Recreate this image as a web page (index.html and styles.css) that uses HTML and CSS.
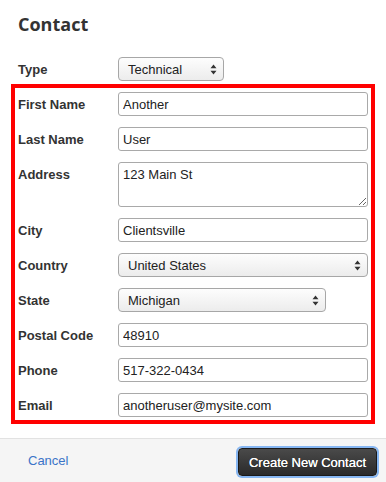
FILE: index.html
```html
<!DOCTYPE html>
<html>
<head>
<meta charset="utf-8">
<link rel="stylesheet" href="styles.css">
</head>
<body>
<div class="panel">
  <h2 class="title">Contact</h2>
  <div class="form">
    <div class="row">
      <label class="lbl">Type</label>
      <div class="sel sel-type"><span class="sel-text">Technical</span>
        <svg class="arr" width="7" height="11" viewBox="0 0 7 11"><path d="M3.5 0.5 L6.5 4.3 H0.5 Z M3.5 10.5 L6.5 6.7 H0.5 Z" fill="#333"/></svg>
      </div>
    </div>
    <div class="highlight">
      <div class="row">
        <label class="lbl">First Name</label>
        <input class="inp" type="text" value="Another">
      </div>
      <div class="row">
        <label class="lbl">Last Name</label>
        <input class="inp" type="text" value="User">
      </div>
      <div class="row">
        <label class="lbl">Address</label>
        <textarea class="inp area">123 Main St</textarea>
      </div>
      <div class="row">
        <label class="lbl">City</label>
        <input class="inp" type="text" value="Clientsville">
      </div>
      <div class="row">
        <label class="lbl">Country</label>
        <div class="sel sel-country"><span class="sel-text">United States</span>
          <svg class="arr" width="7" height="11" viewBox="0 0 7 11"><path d="M3.5 0.5 L6.5 4.3 H0.5 Z M3.5 10.5 L6.5 6.7 H0.5 Z" fill="#333"/></svg>
        </div>
      </div>
      <div class="row">
        <label class="lbl">State</label>
        <div class="sel sel-state"><span class="sel-text">Michigan</span>
          <svg class="arr" width="7" height="11" viewBox="0 0 7 11"><path d="M3.5 0.5 L6.5 4.3 H0.5 Z M3.5 10.5 L6.5 6.7 H0.5 Z" fill="#333"/></svg>
        </div>
      </div>
      <div class="row">
        <label class="lbl">Postal Code</label>
        <input class="inp" type="text" value="48910">
      </div>
      <div class="row">
        <label class="lbl">Phone</label>
        <input class="inp" type="text" value="517-322-0434">
      </div>
      <div class="row">
        <label class="lbl">Email</label>
        <input class="inp" type="text" value="anotheruser@mysite.com">
      </div>
    </div>
  </div>
  <div class="footer">
    <a class="cancel" href="#">Cancel</a>
    <button class="btn">Create New Contact</button>
  </div>
</div>
</body>
</html>
```
FILE: styles.css
```css
html, body {
  margin: 0;
  padding: 0;
  background: #fff;
}
body {
  font-family: "Liberation Sans", Arial, sans-serif;
  font-size: 13px;
  color: #333;
}
.panel {
  width: 386px;
  height: 482px;
  display: flex;
  flex-direction: column;
  overflow: hidden;
}
.title {
  font-family: "Open Sans", sans-serif;
  font-weight: 700;
  font-size: 18px;
  line-height: 24px;
  margin: 12px 18px 0;
  color: #333;
}
.form {
  padding: 21px 18px 0;
  display: flex;
  flex-direction: column;
}
.highlight {
  margin: 3px -7px 0;
  border: 4px solid #ff0000;
  padding: 4px 3px 3px;
  display: flex;
  flex-direction: column;
  gap: 11px;
}
.row {
  display: flex;
  align-items: flex-start;
}
.lbl {
  width: 100px;
  flex: none;
  font-weight: 700;
  font-size: 13px;
  line-height: 15px;
  padding-top: 5px;
  color: #333;
}
.inp {
  box-sizing: border-box;
  width: 250px;
  height: 24px;
  margin: 0;
  border: 1px solid #a9a9a9;
  border-radius: 3px;
  padding: 0 4px;
  font-family: "Liberation Sans", Arial, sans-serif;
  font-size: 13px;
  color: #222;
  background: #fff;
  outline: none;
}
.area {
  height: 45px;
  padding: 4px 4px;
  line-height: 15px;
  resize: vertical;
}
.sel {
  position: relative;
  box-sizing: border-box;
  height: 24px;
  border: 1px solid #a7a7a7;
  border-radius: 4px;
  background: linear-gradient(#fdfdfd, #ececec);
  display: flex;
  align-items: center;
  padding: 0 9px;
  font-size: 13px;
  color: #222;
}
.sel-text {
  flex: 1;
}
.arr {
  display: block;
  flex: none;
  margin-right: -3px;
}
.sel-type { width: 106px; }
.sel-country { width: 250px; }
.sel-state { width: 208px; }
.footer {
  margin-top: 14px;
  flex: 1;
  background: #f5f5f5;
  border-top: 1px solid #e2e2e2;
  display: flex;
  align-items: flex-start;
  justify-content: space-between;
  padding: 9px 9px 0 28px;
}
.cancel {
  color: #3b74c8;
  text-decoration: none;
  font-size: 13px;
  line-height: 15px;
  margin-top: 5px;
}
.btn {
  box-sizing: border-box;
  height: 28px;
  width: 139px;
  border: 1px solid #1a1a1a;
  border-radius: 4px;
  background: linear-gradient(#4a4a4a, #2a2a2a);
  color: #fff;
  font-family: "Liberation Sans", Arial, sans-serif;
  font-size: 13px;
  padding: 0;
  text-shadow: 0 0 0.6px #fff;
  box-shadow: 0 0 0 2px #86b6f2;
}
```
